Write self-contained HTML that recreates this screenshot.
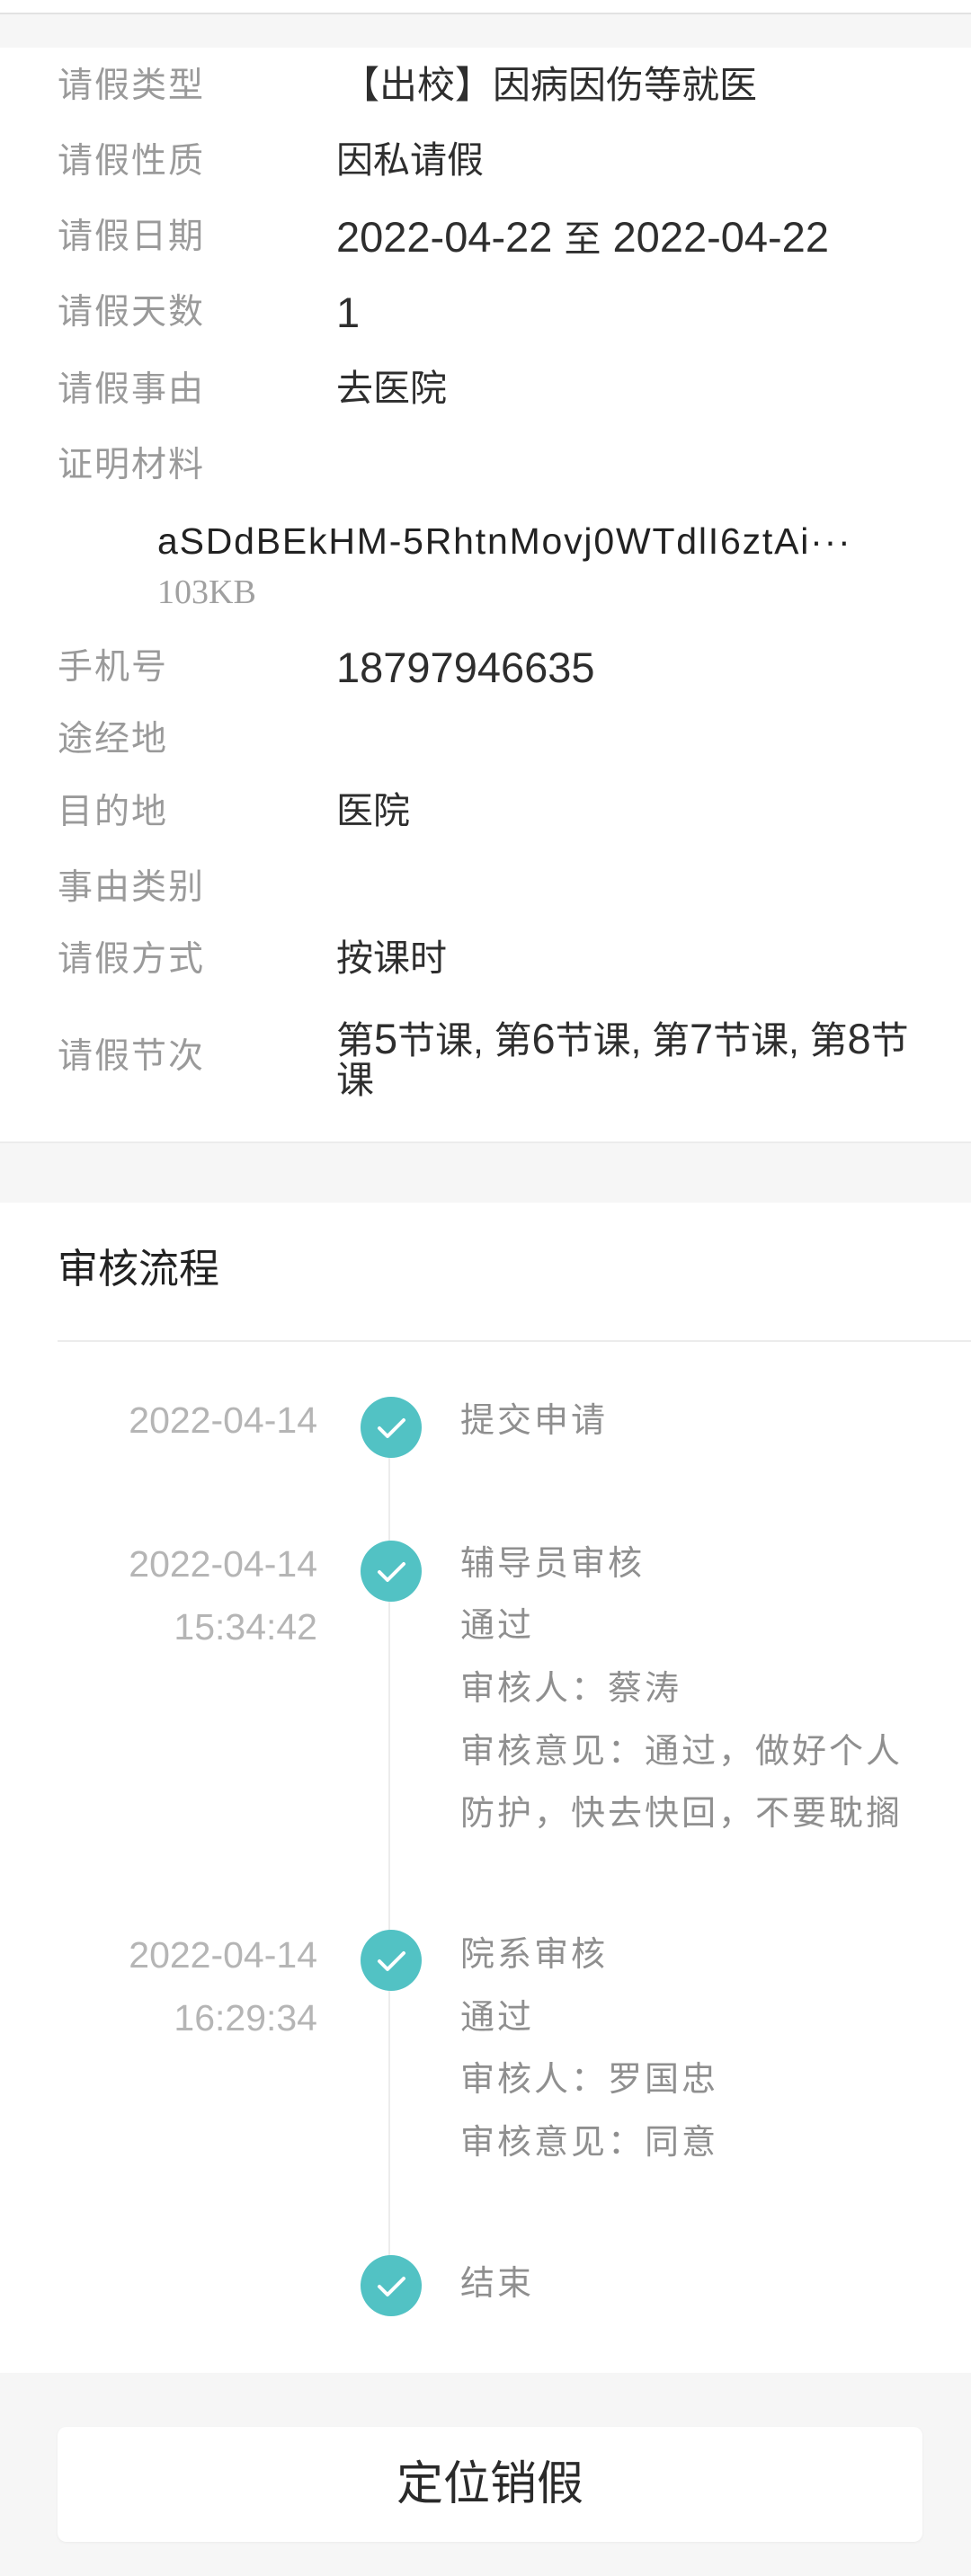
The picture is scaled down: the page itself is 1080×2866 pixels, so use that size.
<!DOCTYPE html>
<html><head><meta charset="utf-8">
<style>
*{margin:0;padding:0;box-sizing:border-box}
body{width:1080px;height:2866px;position:relative;background:#f6f6f6;font-family:"Liberation Sans","Noto Sans CJK SC",sans-serif;overflow:hidden}
.abs{position:absolute;white-space:nowrap;line-height:1}
.lbl{left:64px;font-size:39px;color:#9a9a9a;letter-spacing:2px}
.val{left:374px;font-size:41px;color:#2e2e2e}
.n{font-size:47px}
.tl{left:512px;font-size:38px;color:#8f8f8f;letter-spacing:3px}
.dt{right:727px;font-size:41px;color:#b5b5b5;text-align:right}
.dot{position:absolute;left:401px;width:68px;height:68px;border-radius:50%;background:#52c2c4}
.dot svg{position:absolute;left:0;top:0}
</style></head><body>
<div class="abs" style="left:0;top:0;width:1080px;height:14px;background:#fff"></div>
<div class="abs" style="left:0;top:14px;width:1080px;height:2px;background:#e2e2e2"></div>
<div class="abs" style="left:0;top:1270px;width:1080px;height:2px;background:#ececec"></div>
<div class="abs" style="left:0;top:53px;width:1080px;height:1217px;background:#fff"></div>

<div class="abs lbl" style="top:76px">请假类型</div>
<div class="abs val" style="top:74px;left:380px;font-size:42px">【出校】因病因伤等就医</div>
<div class="abs lbl" style="top:160px">请假性质</div>
<div class="abs val" style="top:158px">因私请假</div>
<div class="abs lbl" style="top:244px">请假日期</div>
<div class="abs val n" style="top:240px">2022-04-22 <span style="font-size:41px">至</span> 2022-04-22</div>
<div class="abs lbl" style="top:328px">请假天数</div>
<div class="abs val n" style="top:324px">1</div>
<div class="abs lbl" style="top:414px">请假事由</div>
<div class="abs val" style="top:412px">去医院</div>
<div class="abs lbl" style="top:498px">证明材料</div>
<div class="abs" style="left:175px;top:582px;font-size:41px;color:#222;letter-spacing:1.8px">aSDdBEkHM-5RhtnMovj0WTdlI6ztAi···</div>
<div class="abs" style="left:175px;top:640px;font-size:38px;color:#a0a0a0;font-family:'Liberation Serif',serif">103KB</div>
<div class="abs lbl" style="top:723px">手机号</div>
<div class="abs val n" style="top:719px">18797946635</div>
<div class="abs lbl" style="top:803px">途经地</div>
<div class="abs lbl" style="top:884px">目的地</div>
<div class="abs val" style="top:882px">医院</div>
<div class="abs lbl" style="top:968px">事由类别</div>
<div class="abs lbl" style="top:1048px">请假方式</div>
<div class="abs val" style="top:1046px">按课时</div>
<div class="abs lbl" style="top:1156px">请假节次</div>
<div class="abs val" style="top:1132px;font-size:42px">第<span class="n">5</span>节课, 第<span class="n">6</span>节课, 第<span class="n">7</span>节课, 第<span class="n">8</span>节</div>
<div class="abs val" style="top:1181px;font-size:42px">课</div>

<div class="abs" style="left:0;top:1338px;width:1080px;height:1302px;background:#fff"></div>
<div class="abs" style="left:64px;top:1389px;font-size:45px;color:#222">审核流程</div>
<div class="abs" style="left:64px;top:1491px;width:1016px;height:2px;background:#ececec"></div>
<div class="abs" style="left:432px;top:1588px;width:2px;height:955px;background:#ececec"></div>

<div class="dot" style="top:1554px"><svg width="68" height="68"><path d="M21 35 L30 44 L48 26" stroke="#fff" stroke-width="4" fill="none" stroke-linecap="round" stroke-linejoin="round"/></svg></div>
<div class="dot" style="top:1714px"><svg width="68" height="68"><path d="M21 35 L30 44 L48 26" stroke="#fff" stroke-width="4" fill="none" stroke-linecap="round" stroke-linejoin="round"/></svg></div>
<div class="dot" style="top:2147px"><svg width="68" height="68"><path d="M21 35 L30 44 L48 26" stroke="#fff" stroke-width="4" fill="none" stroke-linecap="round" stroke-linejoin="round"/></svg></div>
<div class="dot" style="top:2509px"><svg width="68" height="68"><path d="M21 35 L30 44 L48 26" stroke="#fff" stroke-width="4" fill="none" stroke-linecap="round" stroke-linejoin="round"/></svg></div>

<div class="abs dt" style="top:1560px">2022-04-14</div>
<div class="abs tl" style="top:1562px">提交申请</div>

<div class="abs dt" style="top:1720px">2022-04-14</div>
<div class="abs dt" style="top:1790px">15:34:42</div>
<div class="abs tl" style="top:1721px">辅导员审核</div>
<div class="abs tl" style="top:1790px">通过</div>
<div class="abs tl" style="top:1860px">审核人：蔡涛</div>
<div class="abs tl" style="top:1930px">审核意见：通过，做好个人</div>
<div class="abs tl" style="top:1999px">防护，快去快回，不要耽搁</div>

<div class="abs dt" style="top:2155px">2022-04-14</div>
<div class="abs dt" style="top:2225px">16:29:34</div>
<div class="abs tl" style="top:2156px">院系审核</div>
<div class="abs tl" style="top:2226px">通过</div>
<div class="abs tl" style="top:2295px">审核人：罗国忠</div>
<div class="abs tl" style="top:2365px">审核意见：同意</div>

<div class="abs tl" style="top:2522px">结束</div>

<div class="abs" style="left:64px;top:2700px;width:962px;height:128px;background:#fff;border-radius:10px;box-shadow:0 1px 3px rgba(0,0,0,0.05)"></div>
<div class="abs" style="left:64px;top:2738px;width:962px;text-align:center;font-size:52px;color:#2a2a2a">定位销假</div>
</body></html>
